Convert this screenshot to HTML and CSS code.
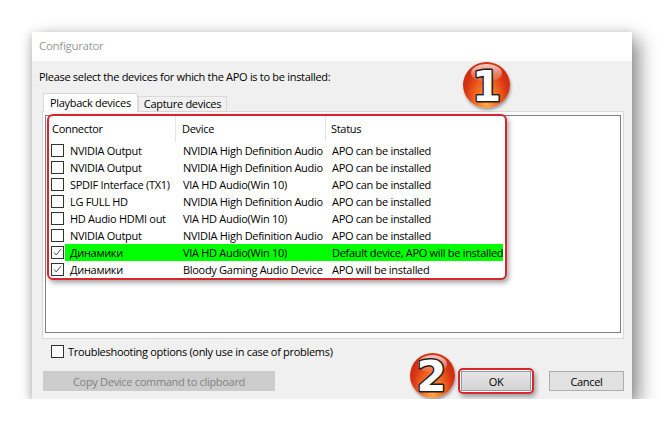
FILE: index.html
```html
<!DOCTYPE html>
<html lang="en">
  <head>
    <meta charset="UTF-8" />
    <title>Configurator</title>
    <link rel="stylesheet" href="styles.css">
  </head>
  <body>
    <div class="dialog">
      <div class="titlebar">Configurator</div>
      <div class="content">
        <p class="prompt">Please select the devices for which the APO is to be installed:</p>

        <div class="tabs">
          <div class="tab active">Playback devices</div>
          <div class="tab">Capture devices</div>
        </div>

        <div class="panel">
          <div class="listbox">
            <div class="marked">
              <div class="head">
                <div class="col">Connector</div>
                <div class="col">Device</div>
                <div class="col">Status</div>
              </div>

              <div class="row">
                <span class="check"></span>
                <div class="cells"><span>NVIDIA Output</span><span>NVIDIA High Definition Audio</span><span>APO can be installed</span></div>
              </div>
              <div class="row">
                <span class="check"></span>
                <div class="cells"><span>NVIDIA Output</span><span>NVIDIA High Definition Audio</span><span>APO can be installed</span></div>
              </div>
              <div class="row">
                <span class="check"></span>
                <div class="cells"><span>SPDIF Interface (TX1)</span><span>VIA HD Audio(Win 10)</span><span>APO can be installed</span></div>
              </div>
              <div class="row">
                <span class="check"></span>
                <div class="cells"><span>LG FULL HD</span><span>NVIDIA High Definition Audio</span><span>APO can be installed</span></div>
              </div>
              <div class="row">
                <span class="check"></span>
                <div class="cells"><span>HD Audio HDMI out</span><span>VIA HD Audio(Win 10)</span><span>APO can be installed</span></div>
              </div>
              <div class="row">
                <span class="check"></span>
                <div class="cells"><span>NVIDIA Output</span><span>NVIDIA High Definition Audio</span><span>APO can be installed</span></div>
              </div>
              <div class="row">
                <span class="check on"><svg viewBox="0 0 13 13"><path d="M2.5 6.5 L5 9.5 L10.5 2.5" /></svg></span>
                <div class="cells selected"><span>Динамики</span><span>VIA HD Audio(Win 10)</span><span>Default device, APO will be installed</span></div>
              </div>
              <div class="row">
                <span class="check on"><svg viewBox="0 0 13 13"><path d="M2.5 6.5 L5 9.5 L10.5 2.5" /></svg></span>
                <div class="cells"><span>Динамики</span><span>Bloody Gaming Audio Device</span><span>APO will be installed</span></div>
              </div>
            </div>
          </div>
        </div>

        <label class="option"><span class="check"></span>Troubleshooting options (only use in case of problems)</label>

        <div class="actions">
          <button class="btn copy" disabled>Copy Device command to clipboard</button>
          <div class="ok-mark"><button class="btn ok">OK</button></div>
          <button class="btn">Cancel</button>
        </div>
      </div>

      <div class="badge one">
        <svg viewBox="0 0 46 46"><text x="23" y="39" text-anchor="middle">1</text></svg>
      </div>
      <div class="badge two">
        <svg viewBox="0 0 46 46"><text x="22" y="39" text-anchor="middle">2</text></svg>
      </div>
    </div>
  </body>
</html>
```

FILE: styles.css
```css
* {
  margin: 0;
  padding: 0;
  box-sizing: border-box;
}

body {
  background: #fff;
  font-family: "Open Sans", "Noto Sans", sans-serif;
  font-size: 11px;
  letter-spacing: -0.3px;
  color: #000;
}

.dialog {
  position: relative;
  width: 600px;
  height: 367px;
  margin: 32px 0 0 32px;
  background: #f0f0f0;
  box-shadow: 7px 7px 18px rgba(0, 0, 0, 0.45), -2px 2px 8px rgba(0, 0, 0, 0.15);
}

.titlebar {
  height: 29px;
  line-height: 28px;
  padding-left: 7px;
  background: #fff;
  color: #999;
  font-size: 11.5px;
}

.content {
  padding: 8px 8px 0 10px;
}

.prompt {
  margin-left: -3px;
  line-height: 16px;
}

/* tabs */
.tabs {
  display: flex;
  align-items: flex-end;
  margin: 8px 0 0 1px;
  height: 18px;
}
.tab {
  height: 15px;
  line-height: 14px;
  padding: 0 5px;
  border: 1px solid #d9d9d9;
  border-bottom: none;
  background: #f0f0f0;
}
.tab.active {
  position: relative;
  z-index: 1;
  height: 19px;
  margin-bottom: -1px;
  padding: 0 6px;
  line-height: 17px;
  background: #fff;
}

.panel {
  height: 228px;
  padding: 3px 2px 5px 2px;
  border: 1px solid #d9d9d9;
  background: #fbfbfb;
}

.listbox {
  height: 100%;
  border: 1px solid #828282;
  background: #fff;
}

/* red annotation frame round the device rows */
.marked {
  width: 460px;
  height: 166px;
  margin: -2px 0 0 1px;
  border: 2px solid #d8252e;
  border-radius: 6px;
  background: #fff;
  box-shadow: 2px 3px 5px rgba(0, 0, 0, 0.35);
}

.head {
  display: grid;
  grid-template-columns: 127px 150px 1fr;
  height: 26px;
}
.head .col {
  line-height: 26px;
  padding-left: 3px;
  border-right: 1px solid #e5e5e5;
  margin: 0 0 3px;
}
.head .col:nth-child(2) {
  padding-left: 6px;
}
.head .col:nth-child(3) {
  padding-left: 5px;
  border-right: none;
}

.row {
  display: flex;
  align-items: center;
  height: 17px;
}
.cells {
  flex: 1;
  display: grid;
  grid-template-columns: 112px 150px 1fr;
  height: 17px;
  line-height: 17px;
  margin-right: 2px;
  white-space: nowrap;
}
.cells span {
  padding-left: 6px;
}
.cells span:first-child {
  padding-left: 5px;
}
.cells span:last-child {
  padding-left: 5px;
}
.cells.selected {
  background: #00ff00;
}

.check {
  display: inline-block;
  flex: none;
  width: 13px;
  height: 13px;
  margin: 0 1px 0 2px;
  border: 1px solid #333;
  background: #fff;
}
.check svg {
  display: block;
  width: 11px;
  height: 11px;
}
.check path {
  fill: none;
  stroke: #444;
  stroke-width: 1.1;
}

.option {
  display: flex;
  align-items: center;
  height: 13px;
  margin: 6px 0 0 7px;
  line-height: 13px;
}
.option .check {
  margin-right: 4px;
}

.actions {
  display: flex;
  align-items: center;
  margin-top: 10px;
}
.btn {
  height: 20px;
  width: 75px;
  border: 1px solid #adadad;
  background: #e1e1e1;
  font: inherit;
  letter-spacing: inherit;
  color: #000;
}
.btn.copy {
  width: 232px;
  margin-left: 1px;
  border-color: #cccccc;
  background: #cccccc;
  color: #838383;
}
.ok-mark {
  margin: 0 15px 0 auto;
  padding: 1px;
  border: 2px solid #d8252e;
  border-radius: 5px;
  background: #fff;
  box-shadow: 2px 3px 5px rgba(0, 0, 0, 0.35);
}
.btn.ok {
  display: block;
  width: 70px;
  background: linear-gradient(#e6e6e6, #d4d4d4);
  border-color: #9a9a9a;
}

/* numbered callouts */
.badge {
  position: absolute;
  border-radius: 50%;
  background: radial-gradient(ellipse at 50% 90%, #ffab4a 0%, #f36a22 35%, #d93414 65%, #b91f0c 100%);
  box-shadow: 1px 2px 3px rgba(0, 0, 0, 0.35);
}
.badge::before {
  content: "";
  position: absolute;
  left: 18%;
  top: 4%;
  width: 64%;
  height: 40%;
  border-radius: 50%;
  background: linear-gradient(rgba(255, 255, 255, 0.75), rgba(255, 255, 255, 0.05));
}
.badge svg {
  position: relative;
  display: block;
  width: 100%;
  height: 100%;
  overflow: visible;
}
.badge text {
  font-family: "DejaVu Sans", sans-serif;
  font-weight: bold;
  font-size: 42px;
  letter-spacing: 0;
  fill: #fff;
  stroke: #1e1e1e;
  stroke-width: 3;
  stroke-linejoin: round;
  paint-order: stroke;
}
.badge.two text {
  font-size: 44px;
}
.badge.one {
  left: 431px;
  top: 30px;
  width: 47px;
  height: 46px;
}
.badge.two {
  left: 378px;
  top: 321px;
  width: 45px;
  height: 45px;
}
```
